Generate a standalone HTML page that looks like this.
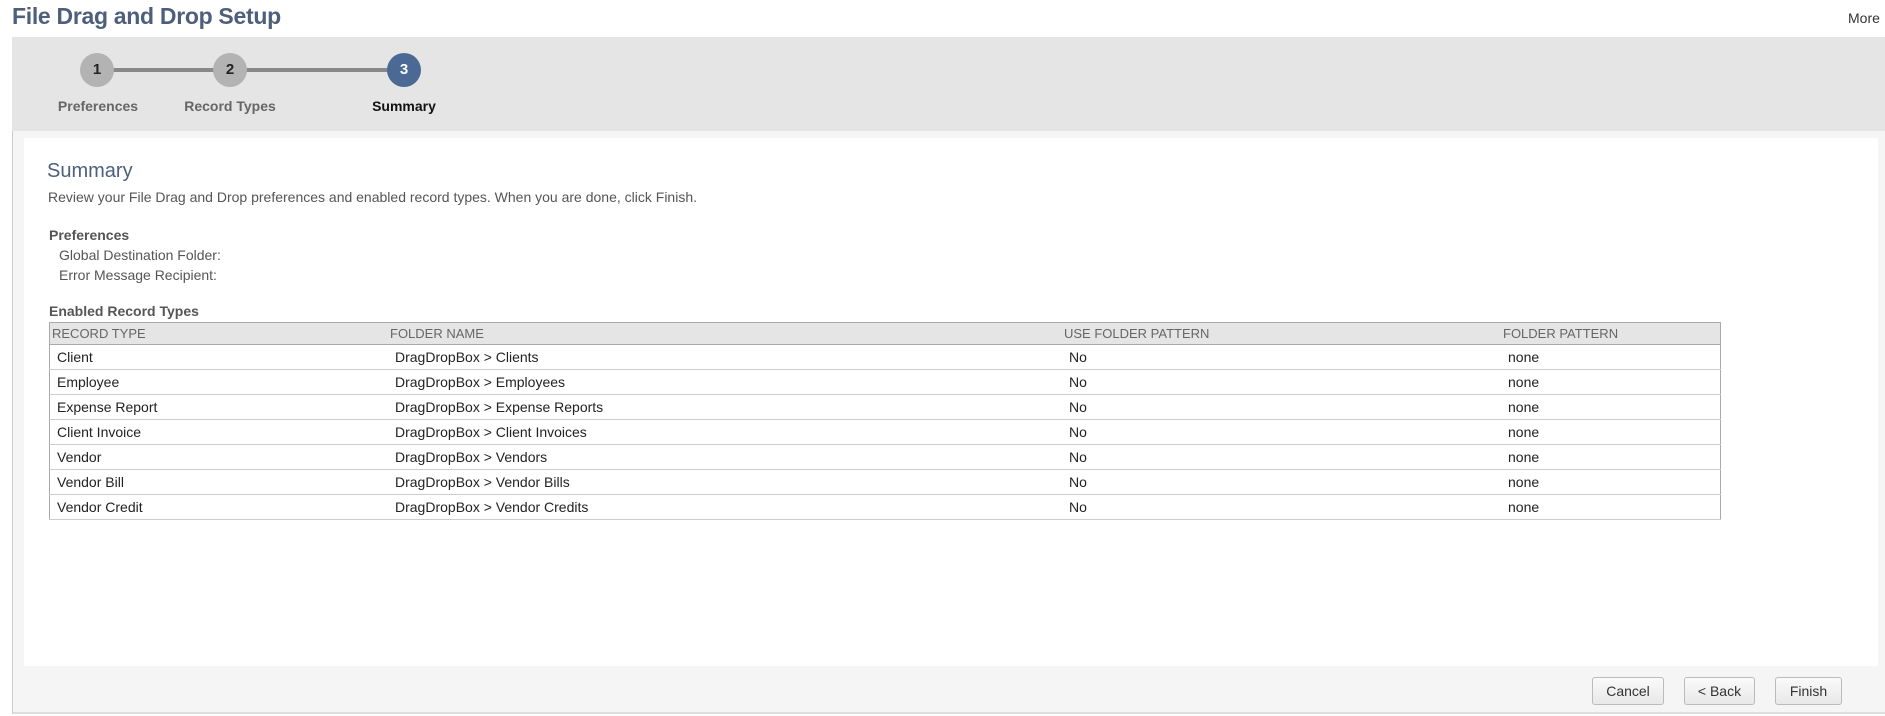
<!DOCTYPE html>
<html><head><style>
body{margin:0;width:1885px;height:716px;background:#fff;font-family:"Liberation Sans",sans-serif;position:relative;overflow:hidden;color:#333}
.a{position:absolute;white-space:nowrap}
.circ{position:absolute;width:34px;height:34px;border-radius:50%;background:#b3b3b3;color:#222;font-weight:bold;font-size:15px;text-align:center;line-height:34px;top:53px}
.lbl{position:absolute;top:98px;font-weight:bold;font-size:14px;color:#666;transform:translateX(-50%)}
table{position:absolute;left:49px;top:322px;width:1672px;border-collapse:collapse;border:1px solid #aaa;font-size:14px}
th{background:#e5e5e5;font-weight:normal;color:#666;text-align:left;height:21px;padding:0 0 0 2px;border-bottom:1px solid #aaa;font-size:13px}
td{height:24px;border-bottom:1px solid #ccc;padding:0 0 0 7px;color:#222}
.btn{position:absolute;top:677px;height:26px;border:1px solid #bbb;border-radius:3px;background:linear-gradient(#fafafa,#e8e8e8);font-size:14px;line-height:26px;text-align:center;color:#333}
</style></head><body>
<div class="a" style="left:12px;top:3px;font-size:23px;font-weight:bold;color:#4d5f7a;letter-spacing:-0.3px">File Drag and Drop Setup</div>
<div class="a" style="left:1848px;top:10px;font-size:14px;color:#333">More</div>
<div class="a" style="left:12px;top:37px;width:1873px;height:94px;background:#e5e5e5"></div>
<div class="a" style="left:110px;top:68px;width:300px;height:4px;background:#888"></div>
<div class="circ" style="left:80px">1</div>
<div class="circ" style="left:213px">2</div>
<div class="circ" style="left:387px;background:#4a6a95;color:#fff">3</div>
<div class="lbl" style="left:98px">Preferences</div>
<div class="lbl" style="left:230px">Record Types</div>
<div class="lbl" style="left:404px;color:#111">Summary</div>
<div class="a" style="left:12px;top:131px;width:1873px;height:581px;background:#f5f5f5;border-left:1px solid #ccc;border-bottom:2px solid #ddd"></div>
<div class="a" style="left:24px;top:138px;width:1854px;height:528px;background:#fff"></div>
<div class="a" style="left:47px;top:160px;font-size:20px;color:#4d5f7a">Summary</div>
<div class="a" style="left:48px;top:189px;font-size:14px;color:#555">Review your File Drag and Drop preferences and enabled record types. When you are done, click Finish.</div>
<div class="a" style="left:49px;top:227px;font-size:14px;font-weight:bold;color:#555">Preferences</div>
<div class="a" style="left:59px;top:247px;font-size:14px;color:#555">Global Destination Folder:</div>
<div class="a" style="left:59px;top:267px;font-size:14px;color:#555">Error Message Recipient:</div>
<div class="a" style="left:49px;top:303px;font-size:14px;font-weight:bold;color:#555">Enabled Record Types</div>
<table>
<tr><th style="width:336px">RECORD TYPE</th><th style="width:672px">FOLDER NAME</th><th style="width:437px">USE FOLDER PATTERN</th><th>FOLDER PATTERN</th></tr>
<tr><td>Client</td><td>DragDropBox &gt; Clients</td><td>No</td><td>none</td></tr>
<tr><td>Employee</td><td>DragDropBox &gt; Employees</td><td>No</td><td>none</td></tr>
<tr><td>Expense Report</td><td>DragDropBox &gt; Expense Reports</td><td>No</td><td>none</td></tr>
<tr><td>Client Invoice</td><td>DragDropBox &gt; Client Invoices</td><td>No</td><td>none</td></tr>
<tr><td>Vendor</td><td>DragDropBox &gt; Vendors</td><td>No</td><td>none</td></tr>
<tr><td>Vendor Bill</td><td>DragDropBox &gt; Vendor Bills</td><td>No</td><td>none</td></tr>
<tr><td>Vendor Credit</td><td>DragDropBox &gt; Vendor Credits</td><td>No</td><td>none</td></tr>
</table>
<div class="btn" style="left:1592px;width:70px">Cancel</div>
<div class="btn" style="left:1684px;width:69px">&lt; Back</div>
<div class="btn" style="left:1775px;width:65px">Finish</div>
</body></html>
